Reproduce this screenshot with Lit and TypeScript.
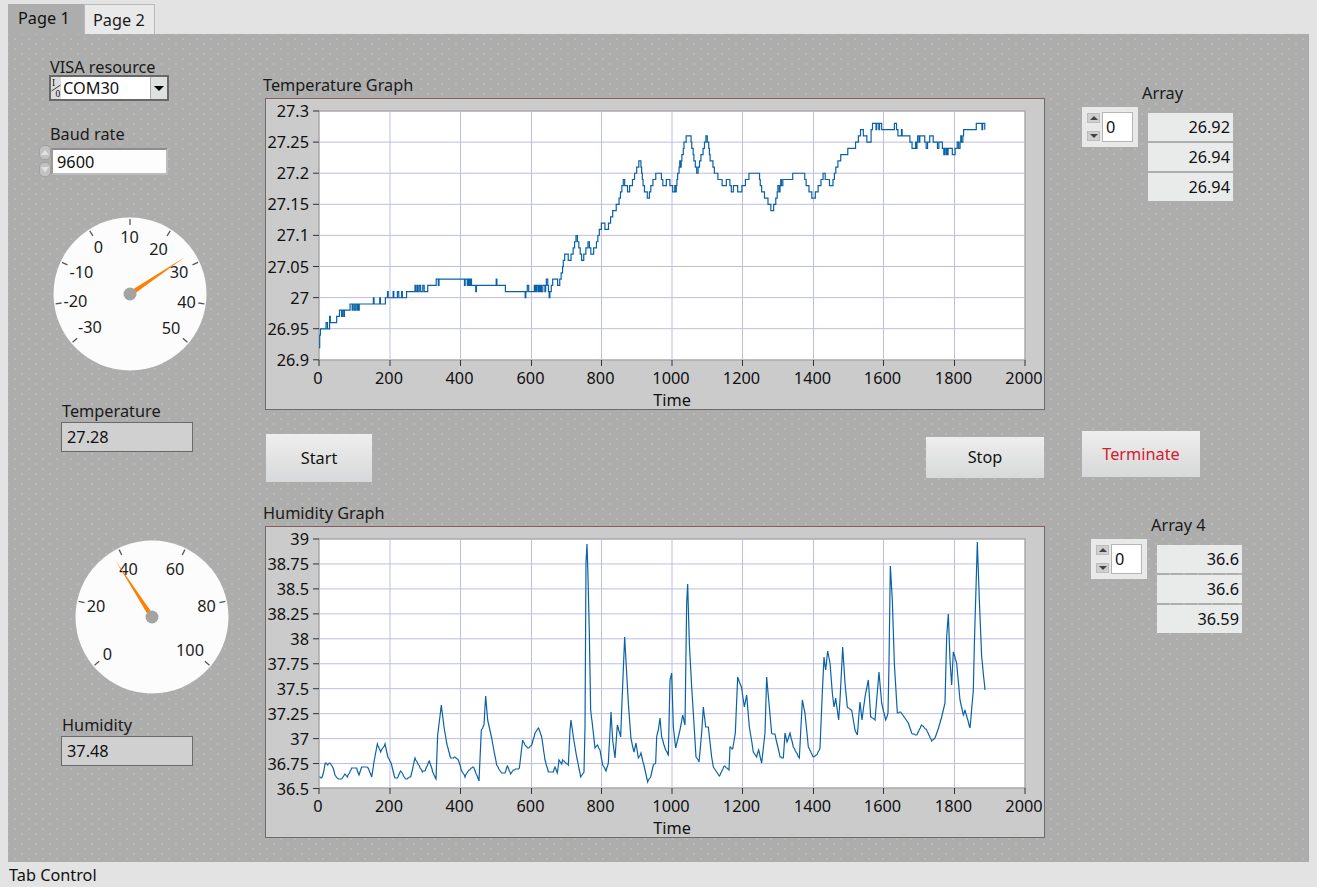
import { LitElement, html, css, svg } from "lit";
import { customElement, property } from "lit/decorators.js";

/* ---------- data ---------- */
const tempKeys: number[][] = [
  [0,26.92],[2,26.94],[5,26.95],[28,26.95],[30,26.96],[48,26.96],[50,26.97],[56,26.97],[58,26.98],[86,26.98],[88,26.99],
  [186,26.99],[188,27],[245,27],[250,27.01],[305,27.01],[308,27.02],[328,27.02],[332,27.03],[408,27.03],[412,27.03],[450,27.02],
  [525,27.02],[530,27.01],[582,27.01],[584,27],[586,27.01],[640,27.01],[645,27.03],[652,27],[659,27.02],[664,27.03],[673,27.03],
  [678,27.02],[687,27.04],[697,27.07],[711,27.06],[730,27.1],[744,27.06],[753,27.07],[763,27.09],[772,27.07],[782,27.08],[801,27.12],
  [815,27.11],[834,27.14],[848,27.15],[862,27.19],[876,27.17],[890,27.19],[909,27.22],[918,27.18],[933,27.16],[942,27.18],[956,27.2],
  [966,27.2],[975,27.18],[990,27.19],[1004,27.17],[1013,27.19],[1027,27.23],[1041,27.26],[1051,27.26],[1060,27.23],[1070,27.2],[1079,27.22],
  [1098,27.26],[1112,27.21],[1122,27.2],[1136,27.19],[1145,27.18],[1160,27.19],[1169,27.17],[1178,27.18],[1193,27.17],[1202,27.18],[1221,27.2],
  [1245,27.2],[1254,27.17],[1268,27.16],[1282,27.14],[1292,27.15],[1301,27.18],[1315,27.19],[1339,27.19],[1344,27.2],[1372,27.2],[1381,27.18],
  [1391,27.17],[1400,27.16],[1410,27.17],[1424,27.19],[1429,27.2],[1438,27.19],[1452,27.18],[1462,27.2],[1466,27.21],[1480,27.23],[1495,27.23],
  [1499,27.24],[1513,27.24],[1523,27.25],[1537,27.27],[1556,27.25],[1570,27.28],[1589,27.28],[1598,27.27],[1627,27.27],[1632,27.28],[1641,27.26],
  [1669,27.26],[1683,27.24],[1698,27.26],[1712,27.26],[1721,27.24],[1731,27.26],[1745,27.25],[1787,27.24],[1797,27.23],[1811,27.25],[1830,27.27],
  [1858,27.27],[1863,27.28],[1887,27.28],
];
const tempZones: number[][] = [
  [20,30,1],[55,85,-1],[88,112,-1],[150,186,1],[190,245,1],[255,305,1],[330,342,-1],[412,450,-1],[480,510,1],[590,640,1],
  [1010,1030,-1],[1110,1125,1],[1300,1325,-1],[1560,1600,-1],[1640,1650,1],[1685,1700,-1],[1745,1785,-1],[1810,1822,-1],[1870,1887,-1],
];

function stepPath(): string {
  let seed = 12345;
  const rand = () => { seed = (seed * 1664525 + 1013904223) % 4294967296; return seed / 4294967296; };
  let d = "";
  let k = 0;
  let prev = 0;
  for (let u = 0; u <= 1887; u += 2) {
    while (k < tempKeys.length - 2 && tempKeys[k + 1][0] < u) k++;
    const [x0, v0] = tempKeys[k];
    const [x1, v1] = tempKeys[k + 1];
    const v = v0 + ((v1 - v0) * (u - x0)) / (x1 - x0);
    let q = Math.round(v * 100);
    const zone = tempZones.find((z) => u >= z[0] && u <= z[1]);
    if (zone && rand() < 0.3) q += zone[2];
    const px = 54 + u * 0.353;
    const py = 13 + ((27.3 - q / 100) / 0.4) * 249;
    d += u === 0 ? `M${px} ${py}` : `H${px}${q !== prev ? `V${py}` : ""}`;
    prev = q;
  }
  return d;
}

/* humidity trace, in thirds of a pixel */
const humA = [178,830,185,835,190,820,196,788,203,795,210,788,218,800,225,825,235,838,245,838,255,822,262,830,275,805,290,805,297,825,305,800,325,803,335,832,343,780,352,733,362,755,375,733,385,775,392,785,405,835,412,835,422,812,437,838,452,830,465,775,487,815,495,812,508,782,518,815,528,838,533,705,544,616,552,680,560,730,572,775,585,772,595,780,605,812,615,830,625,812,640,800,657,842,664,690,672,675,677,587,683,660,695,715,710,795,725,820,735,820,742,797,752,822,760,810,778,805,788,720,795,735,805,745,815,735,825,700,835,683,845,710,855,780,865,815,880,815,885,800,892,820,897,780,905,792,908,780,925,795,930,690,933,660,940,710,950,770,962,830,972,815,975,680,978,190,981,133,984,230,988,400,992,630,998,680,1005,745,1012,735,1020,750,1028,795,1038,812,1045,790,1053,635,1058,720,1065,775,1072,675,1082,710,1085,630,1094,410,1100,520,1105,610,1113,718,1122,755,1128,730,1135,775,1143,760,1155,810,1163,845,1172,830,1180,795,1187,790,1190,710,1195,690];
const humB = [0,655,5,710,15,745,25,765,30,540,35,520,40,680,47,745,60,690,68,645,75,675,80,310,83,252,88,430,95,560,100,640,108,770,117,785,125,700,130,622,137,680,145,680,155,770,160,800,178,828,193,797,207,810,210,740,218,748,226,700,233,530,245,565,253,620,260,585,268,680,280,755,290,770,296,750,305,790,315,700,320,532,327,610,335,700,345,703,360,770,370,775,375,700,381,725,390,700,400,740,418,775,427,600,435,640,445,740,460,772,470,765,480,745,487,575,492,472,497,510,503,452,510,490,517,580,522,620,527,595,536,660,540,600,548,442,555,550,562,622,575,630,585,690,592,705,600,605,606,660,615,590,625,540,632,650,645,660,657,515,665,610,677,660,684,640,687,490,691,198,697,300,703,490,712,640,722,635,745,670,755,700,770,705,785,675,800,690,815,722,825,715,840,670,855,610,860,410,865,342,870,480,875,555,880,455,890,490,900,600,910,645,915,630,930,685,940,570,943,435,952,127,958,300,965,470,975,570];

function humPath(): string {
  const pts: number[][] = [];
  for (let i = 0; i < humA.length; i += 2) pts.push([humA[i] / 3 - 5, humA[i + 1] / 3 - 26]);
  for (let i = 0; i < humB.length; i += 2) pts.push([(humB[i] + 1200) / 3 - 5, humB[i + 1] / 3 - 26]);
  let d = `M${pts[0][0]} ${Math.round(pts[0][1])}`;
  for (let k = 0; k < pts.length - 1; k++) {
    const [x0, y0] = pts[k];
    const [x1, y1] = pts[k + 1];
    const n = Math.max(1, Math.round((x1 - x0) / 0.7));
    for (let i = 1; i <= n; i++) {
      d += `L${x0 + ((x1 - x0) * i) / n} ${Math.round(y0 + ((y1 - y0) * i) / n)}`;
    }
  }
  return d;
}

const xTicks = [0, 200, 400, 600, 800, 1000, 1200, 1400, 1600, 1800, 2000];
const xPos = [0, 71, 141.5, 212.5, 282.5, 353, 423.5, 494.5, 564.5, 635.5, 706];

/* ---------- chart ---------- */
@customElement("graph-chart")
class GraphChart extends LitElement {
  @property({ type: Array }) yLabels: { t: string; y: number }[] = [];
  @property() trace = "";
  static styles = css`
    :host { display: block; width: 780px; height: 312px; }
    svg { display: block; overflow: visible; }
    .frame { fill: #cbcbcb; stroke: #6c6c6c; stroke-width: 1; }
    .topline { stroke: #856060; stroke-width: 1; }
    .plot { fill: #fff; stroke: #a9a9a9; stroke-width: 1.5; }
    .grid { stroke: #bdbde6; stroke-width: 1; }
    .tick { stroke: #333; stroke-width: 1; }
    .data { fill: none; stroke: #0a62a6; stroke-width: 1.2; }
    text { font-size: 16.3px; fill: #111; }
  `;
  render() {
    const L = 54, T = 13, W = 706, H = 249;
    return html`<svg width="780" height="312" viewBox="0 0 780 312">
      <rect class="frame" x="0.5" y="0.5" width="779" height="311"></rect>
      <line class="topline" x1="0" y1="0.5" x2="780" y2="0.5"></line>
      <rect class="plot" x=${L} y=${T} width=${W} height=${H}></rect>
      ${xPos.slice(1, -1).map((x) => svg`<line class="grid" x1=${L + x} x2=${L + x} y1=${T} y2=${T + H}></line>`)}
      ${this.yLabels.slice(1, -1).map((l) => svg`<line class="grid" x1=${L} x2=${L + W} y1=${l.y} y2=${l.y}></line>`)}
      ${this.yLabels.map((l) => svg`
        <line class="tick" x1=${L - 6} x2=${L} y1=${l.y} y2=${l.y}></line>
        <text x=${L - 10} y=${l.y + 6} text-anchor="end">${l.t}</text>`)}
      ${xPos.map((x, i) => svg`
        <line class="tick" x1=${L + x} x2=${L + x} y1=${T + H} y2=${T + H + 6}></line>
        <text x=${L + x - 1} y=${T + H + 24} text-anchor="middle">${xTicks[i]}</text>`)}
      <text x="407" y="308" text-anchor="middle">Time</text>
      <path class="data" d=${this.trace}></path>
    </svg>`;
  }
}

/* ---------- gauge ---------- */
@customElement("gauge-dial")
class GaugeDial extends LitElement {
  @property({ type: Array }) angles: number[] = [];
  @property({ type: Array }) labels: { t: string; x: number; y: number }[] = [];
  @property({ type: Array }) tip: number[] = [0, 0];
  static styles = css`
    :host { display: block; width: 154px; height: 154px; }
    svg { display: block; }
    .face { fill: #fcfcfc; }
    .tick { stroke: #555; stroke-width: 1.3; }
    .hub { fill: #a3a3a3; }
    .needle { fill: #ff7f00; }
    text { font-size: 16.3px; fill: #1c1c1c; }
  `;
  render() {
    const c = 77;
    const [tx, ty] = this.tip;
    const len = Math.hypot(tx - c, ty - c);
    const nx = (-(ty - c) / len) * 2.4;
    const ny = ((tx - c) / len) * 2.4;
    return html`<svg width="154" height="154" viewBox="0 0 154 154">
      <circle class="face" cx=${c} cy=${c} r="76.5"></circle>
      ${this.angles.map((a) => {
        const r = (a * Math.PI) / 180;
        const s = Math.sin(r), k = Math.cos(r);
        return svg`<line class="tick" x1=${c + 69 * s} y1=${c - 69 * k} x2=${c + 75 * s} y2=${c - 75 * k}></line>`;
      })}
      ${this.labels.map((l) => svg`<text x=${l.x} y=${l.y + 6} text-anchor="middle">${l.t}</text>`)}
      <polygon class="needle" points="${c + nx},${c + ny} ${c - nx},${c - ny} ${tx},${ty}"></polygon>
      <circle class="hub" cx=${c} cy=${c} r="6.5"></circle>
    </svg>`;
  }
}

/* ---------- array ---------- */
@customElement("array-view")
class ArrayView extends LitElement {
  @property() label = "";
  @property({ type: Array }) values: string[] = [];
  static styles = css`
    :host { display: block; }
    .label { height: 16px; line-height: 16px; font-size: 16.3px; color: #1a1a1a; margin-left: 60px; }
    .row { display: flex; align-items: flex-start; gap: 10px; margin-top: 6px; }
    .index { width: 56px; height: 40px; box-sizing: border-box; background: #e9e9e9; display: flex; padding: 5px; gap: 2px; }
    .spin { width: 13px; display: flex; flex-direction: column; justify-content: space-between; padding: 1px 0; }
    .spin span { height: 10px; background: #cfcfcf; border: 1px solid #bdbdbd; box-sizing: border-box; display: flex; align-items: center; justify-content: center; }
    .up { width: 0; height: 0; border: 4px solid transparent; border-top: 0; border-bottom: 4px solid #444; }
    .down { width: 0; height: 0; border: 4px solid transparent; border-bottom: 0; border-top: 4px solid #444; }
    .input { width: 31px; height: 30px; box-sizing: border-box; background: #fff; border: 1px solid #b5b5b5; font-size: 16.3px; line-height: 28px; padding-left: 3px; color: #111; }
    .items { margin-top: 6px; display: flex; flex-direction: column; gap: 2px; }
    .items div { width: 85px; height: 28px; box-sizing: border-box; background: #e9ebeb; text-align: right; padding-right: 3px; font-size: 16.3px; line-height: 28px; color: #111; }
  `;
  render() {
    return html`
      <div class="label">${this.label}</div>
      <div class="row">
        <div class="index">
          <div class="spin"><span><i class="up"></i></span><span><i class="down"></i></span></div>
          <div class="input">0</div>
        </div>
        <div class="items">${this.values.map((v) => html`<div>${v}</div>`)}</div>
      </div>`;
  }
}

/* ---------- root ---------- */
const tempY = ["27.3","27.25","27.2","27.15","27.1","27.05","27","26.95","26.9"].map((t, i) => ({ t, y: 13 + i * 31.1 }));
const humY = ["39","38.75","38.5","38.25","38","37.75","37.5","37.25","37","36.75","36.5"].map((t, i) => ({ t, y: 13 + i * 24.95 }));
const tempTrace = stepPath();
const humTrace = humPath();

const g1Angles = [-130, -97.5, -65, -32.5, 0, 32.5, 65, 97.5, 130];
const g1Labels = [
  { t: "-30", x: 37, y: 110 }, { t: "-20", x: 22.5, y: 83.5 }, { t: "-10", x: 28.5, y: 55 },
  { t: "0", x: 45.5, y: 29.5 }, { t: "10", x: 76.5, y: 19.5 }, { t: "20", x: 105.5, y: 32 },
  { t: "30", x: 126, y: 54.5 }, { t: "40", x: 133.5, y: 84.5 }, { t: "50", x: 118, y: 111 },
];
const g2Angles = [-130, -78, -26, 26, 78, 130];
const g2Labels = [
  { t: "0", x: 32.5, y: 113.5 }, { t: "20", x: 21, y: 65.5 }, { t: "40", x: 53.5, y: 28.5 },
  { t: "60", x: 100, y: 28.5 }, { t: "80", x: 131.5, y: 65.5 }, { t: "100", x: 115, y: 109.5 },
];

@customElement("app-root")
class AppRoot extends LitElement {
  static styles = css`
    :host { display: block; width: 1317px; height: 887px; font-family: "Noto Sans", "Open Sans", sans-serif; background: #e3e3e3; color: #1a1a1a; overflow: hidden; }
    .tabs { height: 34px; display: flex; align-items: flex-end; padding-left: 8px; }
    .tab { box-sizing: border-box; height: 30px; font-size: 16.3px; }
    .tab.on { width: 76px; background: #adadad; padding-left: 10px; line-height: 28px; color: #111; }
    .tab.off { width: 71px; background: #e9e9e9; border: 1px solid #b9b9b9; border-bottom: 0; padding-left: 8px; line-height: 30px; }
    .panel {
      height: 828px; margin: 0 8px; display: flex;
      background-color: #adadad;
      background-image:
        radial-gradient(circle, rgba(238,232,160,.32) .6px, transparent .9px),
        radial-gradient(circle, rgba(238,232,160,.32) .6px, transparent .9px);
      background-size: 14px 10px;
      background-position: 0 0, 7px 5px;
    }
    .left { width: 255px; flex: none; display: flex; flex-direction: column; align-items: flex-start; }
    .center { width: 782px; flex: none; }
    .right { flex: none; margin-left: 37px; }
    .label { height: 16px; line-height: 16px; font-size: 16.3px; white-space: nowrap; color: #1a1a1a; }

    .visa-label { margin: 25px 0 0 42px; }
    .visa { margin-left: 41px; width: 120px; height: 26px; box-sizing: border-box; border: 2px solid #686868; background: #fff; display: flex; align-items: center; font-size: 16.3px; color: #111; }
    .io { display: block; width: 10px; height: 22px; margin-right: 2px; flex: none; background: #dcdcdc; }
    .io text { font-family: "Liberation Serif", serif; font-size: 9.5px; fill: #111; }
    .io line { stroke: #111; stroke-width: .8; }
    .visa .val { flex: 1; }
    .drop { width: 17px; height: 22px; background: #dfe0e0; border-left: 1px solid #aaa; box-sizing: border-box; display: flex; align-items: center; justify-content: center; }
    .drop i { width: 0; height: 0; border: 5px solid transparent; border-bottom: 0; border-top: 5px solid #000; }

    .baud-label { margin: 25px 0 0 42px; }
    .baud { margin: 3px 0 0 31px; display: flex; align-items: center; height: 32px; }
    .baud-spin { width: 12px; height: 32px; display: flex; flex-direction: column; gap: 2px; }
    .baud-spin span { flex: 1; box-sizing: border-box; background: #c2c2c2; border: 1px solid #a0a0a0; border-radius: 5px; display: flex; align-items: center; justify-content: center; }
    .baud-spin .up { width: 0; height: 0; border: 4px solid transparent; border-top: 0; border-bottom: 5px solid #e2e2e2; }
    .baud-spin .down { width: 0; height: 0; border: 4px solid transparent; border-bottom: 0; border-top: 5px solid #e2e2e2; }
    .baud-box { width: 117px; height: 27px; box-sizing: border-box; background: #fdfdfd; border: 2px solid #bcbcbc; border-top-color: #8d8d8d; border-left-color: #9a9a9a; font-size: 16.3px; line-height: 24px; padding-left: 4px; color: #111; }

    .g1 { margin: 40px 0 0 45px; }
    .t-label { margin: 32px 0 0 54px; }
    .ind { margin: 3px 0 0 53px; width: 132px; height: 30px; box-sizing: border-box; background: #d0d0d0; border: 1px solid #6a6a6a; font-size: 16.3px; line-height: 28px; padding-left: 5px; color: #111; }
    .g2 { margin: 88px 0 0 67px; }
    .h-label { margin: 23px 0 0 54px; }

    .graph-label { margin-top: 43px; }
    .center graph-chart { margin: 5px 0 0 2px; }
    .btns { display: flex; justify-content: space-between; align-items: flex-start; margin: 24px 1px 0 3px; height: 48px; }
    button {
      box-sizing: border-box; border: 0; padding: 0; font: inherit; font-size: 16.3px; color: #111;
      background: linear-gradient(#eeeeee, #d7d8d9);
    }
    .start { width: 106px; height: 48px; }
    .stop { width: 118px; height: 41px; margin-top: 3px; padding-bottom: 2px; }
    .humi-label { margin-top: 23px; }

    .arr1 { margin-top: 51px; }
    .term { display: block; width: 118px; height: 46px; margin-top: 230px; color: #d0202f; }
    .arr2 { margin: 40px 0 0 9px; }

    .caption { height: 25px; line-height: 27px; font-size: 16.3px; padding-left: 9px; color: #111; }
  `;
  render() {
    return html`
      <div class="tabs">
        <div class="tab on">Page 1</div>
        <div class="tab off">Page 2</div>
      </div>
      <div class="panel">
        <div class="left">
          <div class="label visa-label">VISA resource</div>
          <div class="visa">
            <svg class="io" viewBox="0 0 10 22" width="10" height="22">
              <text x="1" y="9">I</text>
              <line x1="0.5" y1="14" x2="9.5" y2="8"></line>
              <text x="4.5" y="20">0</text>
            </svg>
            <div class="val">COM30</div>
            <div class="drop"><i></i></div>
          </div>
          <div class="label baud-label">Baud rate</div>
          <div class="baud">
            <div class="baud-spin"><span><i class="up"></i></span><span><i class="down"></i></span></div>
            <div class="baud-box">9600</div>
          </div>
          <gauge-dial class="g1" .angles=${g1Angles} .labels=${g1Labels} .tip=${[132, 40]}></gauge-dial>
          <div class="label t-label">Temperature</div>
          <div class="ind">27.28</div>
          <gauge-dial class="g2" .angles=${g2Angles} .labels=${g2Labels} .tip=${[40.5, 20.5]}></gauge-dial>
          <div class="label h-label">Humidity</div>
          <div class="ind">37.48</div>
        </div>
        <div class="center">
          <div class="label graph-label">Temperature Graph</div>
          <graph-chart .yLabels=${tempY} .trace=${tempTrace}></graph-chart>
          <div class="btns">
            <button class="start">Start</button>
            <button class="stop">Stop</button>
          </div>
          <div class="label humi-label">Humidity Graph</div>
          <graph-chart .yLabels=${humY} .trace=${humTrace}></graph-chart>
        </div>
        <div class="right">
          <array-view class="arr1" label="Array" .values=${["26.92", "26.94", "26.94"]}></array-view>
          <button class="term">Terminate</button>
          <array-view class="arr2" label="Array 4" .values=${["36.6", "36.6", "36.59"]}></array-view>
        </div>
      </div>
      <div class="caption">Tab Control</div>
    `;
  }
}
